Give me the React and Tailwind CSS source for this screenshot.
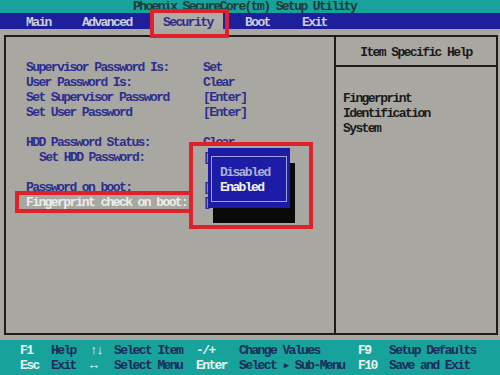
import React from "react";

const rows = [
  { l: "Supervisor Password Is:", v: "Set" },
  { l: "User Password Is:", v: "Clear" },
  { l: "Set Supervisor Password", v: "[Enter]" },
  { l: "Set User Password", v: "[Enter]" },
  { l: "", v: "" },
  { l: "HDD Password Status:", v: "Clear" },
  { l: "Set HDD Password:", v: "[", indent: true },
  { l: "", v: "" },
  { l: "Password on boot:", v: "[" },
  { l: "Fingerprint check on boot:", v: "[", sel: true },
];

export default function App() {
  return (
    <div className="relative w-[500px] h-[375px] overflow-hidden flex flex-col font-['Liberation_Mono',monospace] font-bold text-[13px] tracking-[-1.6px] leading-[15px]">
      {/* title bar */}
      <div className="h-[13px] bg-[#17a39b] text-[#1e3a3a] pl-[133px] whitespace-pre leading-[13px]">
        <div className="pt-[1px] leading-[12px]">Phoenix SecureCore(tm) Setup Utility</div>
      </div>
      {/* menu bar */}
      <div className="h-[16px] bg-[#1d1f9c] flex items-stretch text-[#cfd0d6] whitespace-pre leading-[13px]">
        <div className="w-[26px]" />
        <div className="w-[56px] pt-[3px]">Main</div>
        <div className="w-[72px] pt-[3px]">Advanced</div>
        <div className="w-[69px] pl-[9px] pt-[3px] bg-[#aeaca6] text-[#2b2e8c]">Security</div>
        <div className="w-[22px]" />
        <div className="w-[57px] pt-[3px]">Boot</div>
        <div className="pt-[3px]">Exit</div>
      </div>
      {/* main */}
      <div className="flex-1 bg-[#a9a7a1] pt-[6px] pl-[4px] pr-[2px] pb-[5px]">
        <div className="h-full border-2 border-[#1c1c1c] flex">
          <div className="w-[330px] border-r-2 border-[#1c1c1c] pt-[23px] pl-[20px]">
            {rows.map((r, i) => (
              <div key={i} className="h-[15px] flex whitespace-pre">
                <div
                  className={
                    "w-[177px] " +
                    (r.indent ? "pl-[13px] " : "") +
                    (r.sel ? "text-[#ececec]" : "text-[#2b2e8c]")
                  }
                >
                  {r.l}
                </div>
                <div className="text-[#2b2e8c]">{r.v}</div>
              </div>
            ))}
          </div>
          <div className="flex-1 flex flex-col">
            <div className="h-[30px] pt-[8px] border-b-2 border-[#1c1c1c] flex justify-center text-[#1a1a1a] whitespace-pre">
              Item Specific Help
            </div>
            <div className="pt-[24px] pl-[7px] text-[#1a1a1a]">
              <div>Fingerprint</div>
              <div>Identification</div>
              <div>System</div>
            </div>
          </div>
        </div>
      </div>
      {/* footer */}
      <div className="h-[35px] bg-[#17a39b] pt-[3px] pl-[20px] whitespace-pre">
        <div className="grid grid-cols-[31px_39px_24px_82px_43px_119px_31px_1fr] text-[#1c2a5c]">
          <div className="text-[#e8f4f0]">F1</div>
          <div>Help</div>
          <div className="text-[#e8f4f0]">↑↓</div>
          <div>Select Item</div>
          <div className="text-[#e8f4f0]">-/+</div>
          <div>Change Values</div>
          <div className="text-[#e8f4f0]">F9</div>
          <div>Setup Defaults</div>
          <div className="text-[#e8f4f0]">Esc</div>
          <div>Exit</div>
          <div className="text-[#e8f4f0]">↔</div>
          <div>Select Menu</div>
          <div className="text-[#e8f4f0]">Enter</div>
          <div>Select ▸ Sub-Menu</div>
          <div className="text-[#e8f4f0]">F10</div>
          <div>Save and Exit</div>
        </div>
      </div>

      {/* popup shadow */}
      <div className="absolute left-[213px] top-[163px] w-[82px] h-[60px] bg-[#0a0a0a]" />
      {/* popup */}
      <div className="absolute left-[208px] top-[148px] w-[82px] h-[60px] bg-[#1c1ca6]">
        <div className="absolute left-[3px] right-[3px] top-[8px] bottom-[6px] border border-[#9ea4dc] pt-[8px] pl-[8px] whitespace-pre">
          <div className="text-[#aab0d8]">Disabled</div>
          <div className="text-[#f4f4f4]">Enabled</div>
        </div>
      </div>

      {/* red annotation boxes */}
      <div className="absolute left-[150px] top-[9px] w-[79px] h-[29px] border-4 border-[#e0202a]" />
      <div className="absolute left-[15px] top-[191px] w-[178px] h-[22px] border-4 border-[#e0202a]" />
      <div className="absolute left-[189px] top-[142px] w-[124px] h-[87px] border-4 border-[#e0202a]" />
    </div>
  );
}
